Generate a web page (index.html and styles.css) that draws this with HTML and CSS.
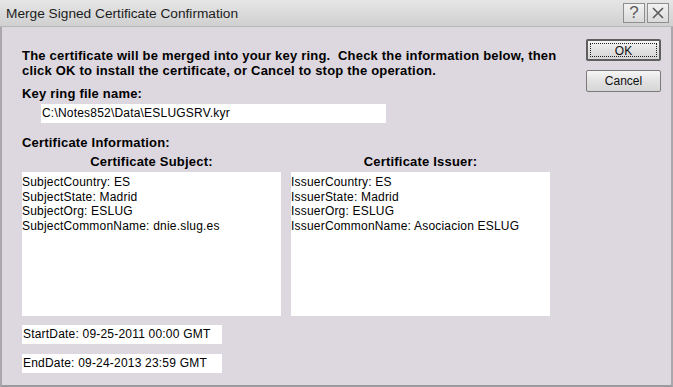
FILE: index.html
```html
<!DOCTYPE html>
<html lang="en">
<head>
    <meta charset="UTF-8">
    <title>Merge Signed Certificate Confirmation</title>
    <link rel="stylesheet" href="styles.css">
</head>
<body>
    <div class="window">
        <div class="titlebar">
            <span class="title">Merge Signed Certificate Confirmation</span>
            <div class="caption-buttons">
                <span class="cap-btn">?</span>
                <span class="cap-btn">
                    <svg width="12" height="12" viewBox="0 0 12 12">
                        <path d="M1 1 L11 11 M11 1 L1 11" stroke="#5a5a5a" stroke-width="1.6" fill="none"/>
                    </svg>
                </span>
            </div>
        </div>
        <div class="content">
            <div class="main">
                <p class="intro">The certificate will be merged into your key ring.&nbsp; Check the information below, then<br>click OK to install the certificate, or Cancel to stop the operation.</p>
                <div class="label">Key ring file name:</div>
                <div class="field file-field">C:\Notes852\Data\ESLUGSRV.kyr</div>
                <div class="label info-label">Certificate Information:</div>
                <div class="columns">
                    <div class="column">
                        <div class="col-head">Certificate Subject:</div>
                        <div class="list-box">
                            SubjectCountry: ES<br>
                            SubjectState: Madrid<br>
                            SubjectOrg: ESLUG<br>
                            SubjectCommonName: dnie.slug.es
                        </div>
                    </div>
                    <div class="column">
                        <div class="col-head">Certificate Issuer:</div>
                        <div class="list-box">
                            IssuerCountry: ES<br>
                            IssuerState: Madrid<br>
                            IssuerOrg: ESLUG<br>
                            IssuerCommonName: Asociacion ESLUG
                        </div>
                    </div>
                </div>
                <div class="field date-field">StartDate: 09-25-2011 00:00 GMT</div>
                <div class="field date-field end">EndDate: 09-24-2013 23:59 GMT</div>
            </div>
            <div class="side">
                <button class="btn default"><span class="focus">OK</span></button>
                <button class="btn">Cancel</button>
            </div>
        </div>
    </div>
</body>
</html>
```
FILE: styles.css
```css
body {
    margin: 0;
    font-family: "Liberation Sans", Arial, sans-serif;
    color: #000;
    background: #ddd7df;
}
.window {
    width: 673px;
    height: 387px;
    box-sizing: border-box;
    border-left: 2px solid #a9a7ab;
    border-right: 2px solid #a9a7ab;
    border-bottom: 2px solid #9c9a9e;
    background: #ddd7df;
}
.titlebar {
    height: 27px;
    margin-left: -2px;
    margin-right: -2px;
    display: flex;
    align-items: center;
    justify-content: space-between;
    background: linear-gradient(#e6e6e6, #d0d0d0);
    border-bottom: 1px solid #b8b8b8;
    box-sizing: border-box;
}
.title {
    font-size: 13.7px;
    color: #1c1c1c;
    padding-left: 6px;
    padding-top: 1px;
}
.caption-buttons {
    display: flex;
    gap: 2px;
    padding-right: 4px;
}
.cap-btn {
    width: 20px;
    height: 18px;
    display: flex;
    align-items: center;
    justify-content: center;
    border: 1px solid #8e8e8e;
    background: linear-gradient(#f2f2f2, #dadada);
    font-size: 17px;
    color: #5a5a5a;
}
.content {
    display: flex;
}
.main {
    width: 564px;
    padding: 21px 0 0 20px;
    display: flex;
    flex-direction: column;
}
.intro {
    margin: 0;
    font-size: 13px;
    letter-spacing: 0.2px;
    font-weight: bold;
    line-height: 15px;
    white-space: nowrap;
}
.label {
    margin-top: 8px;
    font-size: 13px;
    letter-spacing: 0.2px;
    font-weight: bold;
    line-height: 15px;
}
.field {
    background: #fff;
    height: 19px;
    line-height: 18px;
    font-size: 12px;
    letter-spacing: 0.2px;
    padding-left: 1px;
    box-sizing: border-box;
}
.file-field {
    margin: 3px 0 0 19px;
    width: 345px;
}
.info-label {
    margin-top: 12px;
}
.columns {
    display: flex;
    gap: 10px;
    margin-top: 4px;
}
.column {
    width: 259px;
}
.col-head {
    text-align: center;
    font-size: 13px;
    letter-spacing: 0.2px;
    font-weight: bold;
    line-height: 15px;
    margin-bottom: 3px;
}
.list-box {
    background: #fff;
    height: 144px;
    box-sizing: border-box;
    padding-top: 3px;
    font-size: 12px;
    letter-spacing: 0.2px;
    line-height: 14.6px;
}
.date-field {
    width: 200px;
    margin-top: 9px;
}
.date-field.end {
    margin-top: 10px;
}
.side {
    display: flex;
    flex-direction: column;
    gap: 9px;
    padding-top: 12px;
}
.btn {
    width: 75px;
    height: 22px;
    padding: 0;
    font-family: "Liberation Sans", Arial, sans-serif;
    font-size: 12px;
    color: #111;
    border: 1px solid #7a7a7a;
    border-radius: 2px;
    background: linear-gradient(#f6f6f6, #e2e2e2 50%, #d6d6d6);
}
.btn.default {
    border: 2px solid #5e5e5e;
    padding: 2px;
}
.focus {
    display: block;
    height: 100%;
    box-sizing: border-box;
    border: 1px dotted #222;
    line-height: 14px;
}
```
